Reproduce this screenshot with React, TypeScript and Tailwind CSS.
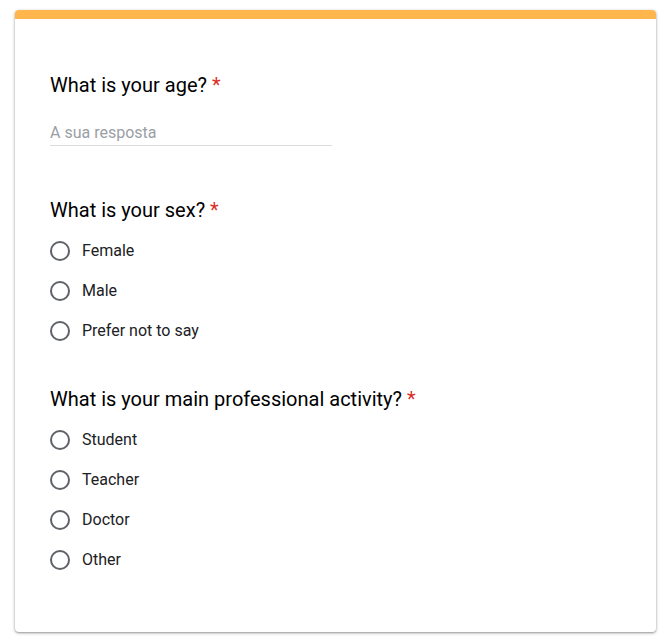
const questions = [
  { title: "What is your sex?", options: ["Female", "Male", "Prefer not to say"] },
  {
    title: "What is your main professional activity?",
    options: ["Student", "Teacher", "Doctor", "Other"],
  },
];

const Title = ({ children }: { children: string }) => (
  <h2 className="text-[20px] leading-6 text-black">
    {children}
    <span className="text-[#d93025] ml-[5px]">*</span>
  </h2>
);

const Radio = ({ label }: { label: string }) => (
  <label className="flex items-center h-10 cursor-pointer">
    <span className="w-5 h-5 rounded-full border-2 border-[#5f6368] shrink-0" />
    <span className="ml-3 text-[16px] text-[#202124]">{label}</span>
  </label>
);

export default function App() {
  return (
    <div
      className="min-h-screen bg-white pt-[10px] pl-[15px] pr-[12px]"
      style={{ fontFamily: "Roboto, 'Liberation Sans', sans-serif" }}
    >
      <div className="bg-white rounded-sm shadow-[0_1px_2px_0_rgba(0,0,0,0.3),0_1px_3px_1px_rgba(0,0,0,0.12)] overflow-hidden">
        <div className="h-[9px] bg-[#ffb74d]" />
        <div className="pl-[35px] pr-6 pt-[54px] pb-[52px]">
          <Title>What is your age?</Title>
          <div className="mt-6 w-[282px] border-b border-[#dadce0]">
            <input
              placeholder="A sua resposta"
              className="block w-full h-6 text-[16px] leading-6 outline-none placeholder:text-[#9aa0a6] text-[#202124]"
            />
          </div>

          <div className="mt-[52px]">
            <Title>{questions[0].title}</Title>
            <div className="mt-[9px]">
              {questions[0].options.map((o) => (
                <Radio key={o} label={o} />
              ))}
            </div>
          </div>

          <div className="mt-[36px]">
            <Title>{questions[1].title}</Title>
            <div className="mt-[9px]">
              {questions[1].options.map((o) => (
                <Radio key={o} label={o} />
              ))}
            </div>
          </div>
        </div>
      </div>
    </div>
  );
}
